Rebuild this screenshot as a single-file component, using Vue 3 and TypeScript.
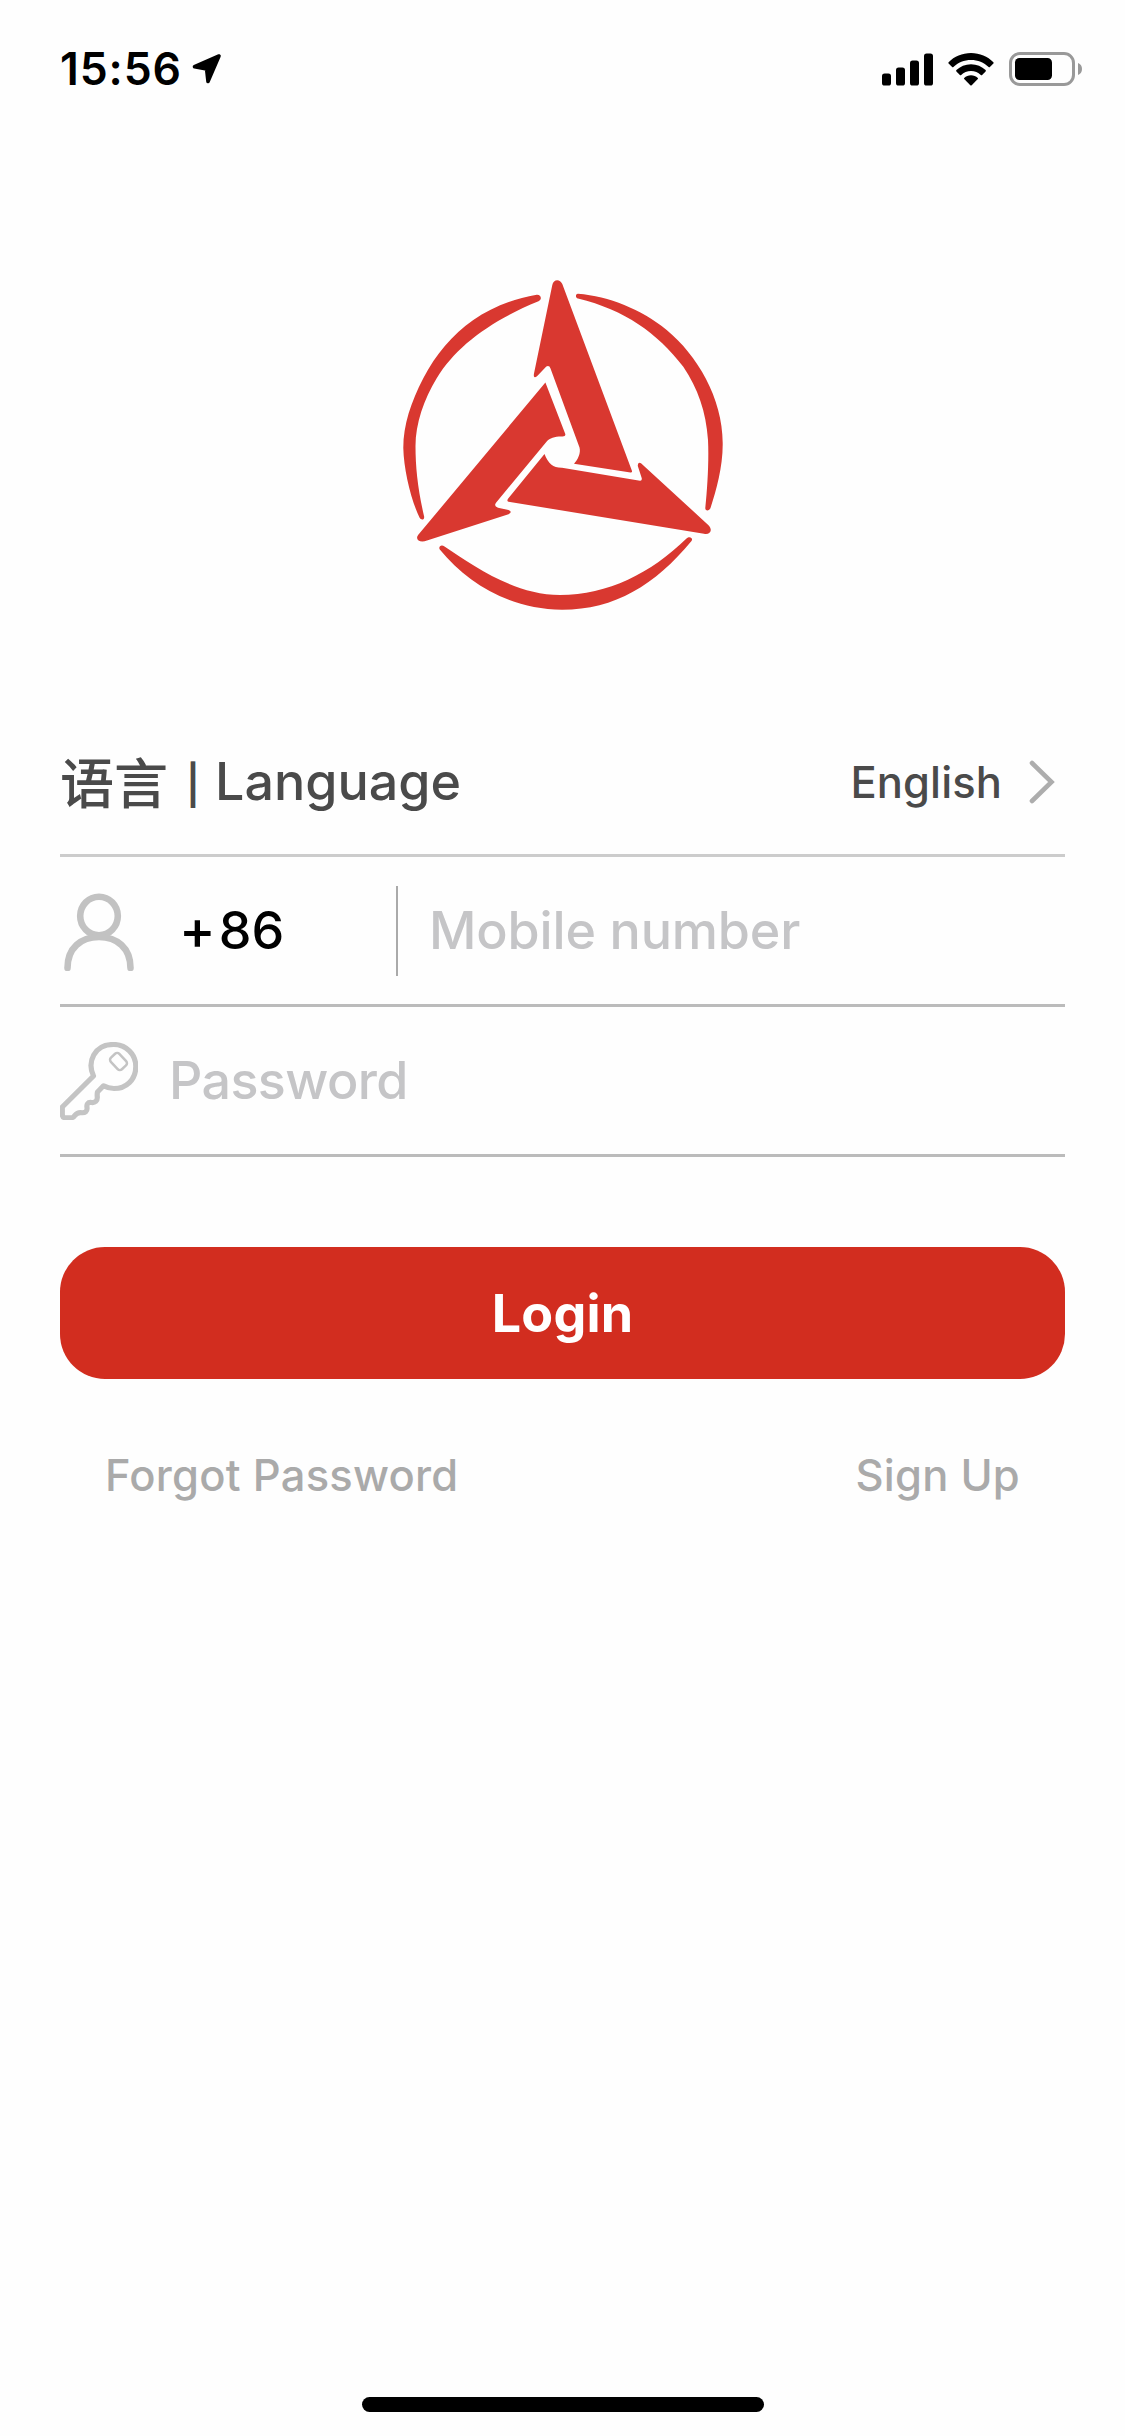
<script setup lang="ts">
import { ref } from 'vue'

interface Bar {
  x: number
  y: number
}

const signalBars: Bar[] = [
  { x: 0, y: 20.5 },
  { x: 14, y: 14.5 },
  { x: 28, y: 7.5 },
  { x: 42, y: 0.5 },
]

const time = ref('15:56')
const language = ref('English')
const dialCode = ref('86')
const mobile = ref('')
const password = ref('')
</script>

<template>
  <div class="screen">
    <header class="status">
      <div class="status-left">
        <span class="time">{{ time }}</span>
        <svg class="location" width="30" height="31" viewBox="0 0 30 31">
          <path d="M27 2 L2.5 12.7 L14.6 15 L16 27.5 Z" fill="#000" stroke="#000" stroke-width="3.6" stroke-linejoin="round" />
        </svg>
      </div>
      <div class="status-right">
        <svg width="51" height="33" viewBox="0 0 51 33">
          <rect v-for="bar in signalBars" :key="bar.x" :x="bar.x" :y="bar.y" width="9" :height="32.5 - bar.y" rx="2.6" />
        </svg>
        <svg class="wifi" width="46" height="33" viewBox="0 0 46 33">
          <path d="M23 0 C31.8 0 39.7 3.5 45.4 9.2 Q46 9.9 45.4 10.6 L41.9 14 Q41.3 14.6 40.6 14 C36 9.5 29.8 7 23 7 C16.2 7 10 9.5 5.4 14 Q4.7 14.6 4.1 14 L0.6 10.6 Q0 9.9 0.6 9.2 C6.3 3.5 14.2 0 23 0 Z" />
          <path d="M23 11.3 C28.7 11.3 33.8 13.5 37.6 17.1 Q38.2 17.8 37.6 18.4 L34.1 21.9 Q33.5 22.5 32.8 21.9 C30.2 19.5 26.8 18 23 18 C19.2 18 15.8 19.5 13.2 21.9 Q12.5 22.5 11.9 21.9 L8.4 18.4 Q7.8 17.8 8.4 17.1 C12.2 13.5 17.3 11.3 23 11.3 Z" />
          <path d="M23 22.3 C25.6 22.3 28 23.3 29.8 24.9 Q30.3 25.5 29.8 26.1 L23.7 32.2 Q23 32.8 22.3 32.2 L16.2 26.1 Q15.7 25.5 16.2 24.9 C18 23.3 20.4 22.3 23 22.3 Z" />
        </svg>
        <svg class="battery" width="74" height="34" viewBox="0 0 74 34">
          <rect x="1.5" y="1.5" width="63" height="31" rx="9.5" fill="none" stroke="#999" stroke-width="3" />
          <rect x="6" y="6" width="37" height="22" rx="4.5" />
          <path d="M69 11 C71.6 12 73 14.3 73 17 C73 19.7 71.6 22 69 23 Z" fill="#999" />
        </svg>
      </div>
    </header>

    <main class="content">
      <div class="brand">
        <svg width="330" height="340" viewBox="398 275 330 340" fill="#d93830">
          <path d="M536.7 294.7 C512 299 491 308 473.3 320 C452 335 436 354 423.3 378.3 C411 402 403.3 425 403.3 448 C403.8 470 411 500 419.5 517.5 C421.5 521 425 519.5 424 516 C418 490 415.5 468 415.5 446 C415.5 424 424 399 436.7 378.3 C456 346 492 320 538.5 301.3 C542.5 299.5 541 294.3 536.7 294.7 Z" />
          <path d="M578 293.8 C609 296.5 641 309 666.7 330 C697 355 722.7 398 722.7 443 C723 466 716.5 490 710.5 508 C709.3 511.3 705 511.3 705.3 508 C707.5 487 709 460 708 440 C706 411 698 389 683.3 366.7 C657 333 625 310 578 298.6 C575 297.7 575.5 293.6 578 293.8 Z" />
          <path d="M444.5 546.5 C475 567 515 595 560 595 C608 595 651 573 686.5 538.5 C689.5 535.5 693.5 538 691.5 541 C655 585 615 609.7 562 609.7 C511 609.7 468 584 439.8 549.5 C438 546.5 441.5 544 444.5 546.5 Z" />
          <path d="M552.3 285 C553.3 279 560 278.5 562.3 284 L632 471 Q632.5 472.7 630.5 472.4 L574 463.7 C578 459.5 581 453 579.5 447.5 L550.5 368.5 Q549.3 365 546.3 366.5 L537 376.3 Q533.3 379 533.9 374 Z" />
          <path d="M545.4 382.5 L565.3 434 Q565.8 436.5 562.5 436.5 C555 436.3 550 438 546.7 441.5 L496 502.8 Q493.5 506.5 498 507.7 L508.5 510 Q513 511.8 508.5 514.2 L427 540.5 C420 543.3 414.5 539.5 418.3 534.8 Z" />
          <path d="M544.5 454 C548 463.5 553.5 468 562 467.8 L640 480.8 Q642.3 481 641.7 478 L637.8 466 Q637.6 461.5 641 463.2 L708.5 525.2 C713 530 710.5 535 704 533.8 L508.5 501.7 Q506.5 501 508 498.7 Z" />
        </svg>
      </div>

      <form class="form" @submit.prevent>
        <div class="row language">
          <div class="language-label"><span class="han">语言</span><span class="bar">|</span><span class="latin">Language</span></div>
          <div class="language-value">
            <span>{{ language }}</span>
            <svg width="26" height="44" viewBox="0 0 26 44">
              <path d="M3 3 L22.5 22 L3 41" fill="none" stroke="#adadad" stroke-width="4.6" stroke-linecap="round" />
            </svg>
          </div>
        </div>

        <div class="row phone">
          <svg class="user" width="78" height="80" viewBox="0 0 78 80" fill="none" stroke="#c2c2c2" stroke-width="6.6" stroke-linecap="round">
            <ellipse cx="39" cy="25" rx="18.8" ry="19.3" />
            <path d="M7.5 77 C7.5 57 21 46 39 46 C57 46 70.5 57 70.5 77" />
          </svg>
          <span class="dial"><span class="plus">+</span>{{ dialCode }}</span>
          <span class="divider"></span>
          <input v-model="mobile" class="field mobile" type="tel" placeholder="Mobile number" />
        </div>

        <div class="row secret">
          <svg class="key" width="78" height="78" viewBox="0 0 78 78" fill="none" stroke="#c4c4c4" stroke-linejoin="round">
            <path d="M33.5 34 C27 20 34 2.5 53.5 2.5 C66 2.5 75.8 12 75.8 24.5 C75.8 38 66 46.5 54 46.5 C50 46.5 46.5 45.5 43.5 43.8 L37.5 50 Q37 52 37.3 55 C37.5 59 35 61 31.5 60.5 C27.5 60 26.5 62.5 27 65.5 C27.5 69.5 25 71 21.5 70.7 C16.5 70 15.5 73 13.5 75 Q12.5 75.8 10 75.8 L5 75.8 Q2.3 75.5 2.3 72 L2.3 65 L33.5 34 Z" stroke-width="5.2" />
            <rect x="-8" y="-5.8" width="16" height="11.6" rx="3" transform="translate(58.5 19.5) rotate(47)" stroke-width="2.5" />
          </svg>
          <input v-model="password" class="field password" type="password" placeholder="Password" />
        </div>

        <button class="login" type="submit">Login</button>
      </form>

      <nav class="links">
        <a class="forgot">Forgot Password</a>
        <a class="signup">Sign Up</a>
      </nav>
    </main>

    <div class="home"></div>
  </div>
</template>

<style>
body {
  margin: 0;
  background: #fefefe;
}
</style>

<style scoped>
.screen {
  display: flex;
  flex-direction: column;
  box-sizing: border-box;
  width: 1125px;
  height: 2436px;
  padding-bottom: 24px;
  background: #fefefe;
  color: #000;
  font-family: Inter, "Noto Sans CJK SC", sans-serif;
  font-weight: 460;
  overflow: hidden;
}

svg {
  display: block;
  flex: none;
}

.status {
  display: flex;
  justify-content: space-between;
  box-sizing: border-box;
  height: 138px;
  padding: 52px 42px 0 60px;
}

.status-left,
.status-right {
  display: flex;
  align-items: center;
  height: 34px;
}

.time {
  width: 132px;
  font-size: 44.5px;
  font-weight: 600;
  line-height: 34px;
  letter-spacing: 0.9px;
  white-space: nowrap;
}

.wifi {
  margin-left: 15px;
}

.battery {
  margin-left: 15px;
}

.content {
  display: flex;
  flex: 1;
  flex-direction: column;
  padding: 0 60px;
}

.brand {
  display: flex;
  justify-content: center;
  height: 435px;
  padding-top: 137px;
}

.form {
  display: flex;
  flex-direction: column;
}

.row {
  display: flex;
  align-items: center;
  height: 147px;
  border-bottom: 3px solid #bbb;
  font-size: 52px;
}

.row.language {
  justify-content: space-between;
  height: 144px;
  border-color: #ccc;
  color: #4a4a4a;
}

.language-label {
  display: flex;
  align-items: center;
  line-height: 60px;
}

.han {
  width: 126px;
  margin-top: -3px;
  font-family: "Noto Sans CJK SC", sans-serif;
  font-weight: 500;
  font-size: 54px;
}

.bar {
  width: 29px;
  margin-top: 6px;
  font-size: 39px;
  font-weight: 600;
}

.language-value {
  display: flex;
  align-items: center;
  gap: 27px;
  padding-right: 10px;
  font-size: 43.5px;
  font-weight: 480;
  letter-spacing: 0.1px;
}

.user {
  margin-top: 0;
}

.dial {
  width: 217px;
  margin-left: 41px;
}

.plus {
  margin-right: 3px;
  font-size: 55px;
  line-height: 52px;
}

.divider {
  width: 2px;
  height: 90px;
  background: #aaa;
}

.field {
  flex: 1;
  min-width: 0;
  padding: 0;
  border: 0;
  outline: 0;
  background: transparent;
  color: #000;
  font: inherit;
}

.field::placeholder {
  color: #c5c5c7;
  opacity: 1;
}

.mobile {
  margin-left: 31px;
  letter-spacing: -0.15px;
}

.password {
  margin-left: 31px;
  letter-spacing: -0.6px;
}

.login {
  height: 132px;
  margin-top: 90px;
  padding: 0;
  border: 0;
  border-radius: 45px;
  background: #d22d1f;
  color: #fff;
  font-family: inherit;
  font-size: 52px;
  font-weight: 650;
  letter-spacing: 0.2px;
}

.links {
  display: flex;
  justify-content: space-between;
  margin-top: 66px;
  padding: 0 45px;
  color: #aaa;
  font-size: 43.5px;
  line-height: 60px;
  letter-spacing: 0.25px;
}

.home {
  align-self: center;
  width: 402px;
  height: 15px;
  border-radius: 8px;
  background: #000;
}
</style>
